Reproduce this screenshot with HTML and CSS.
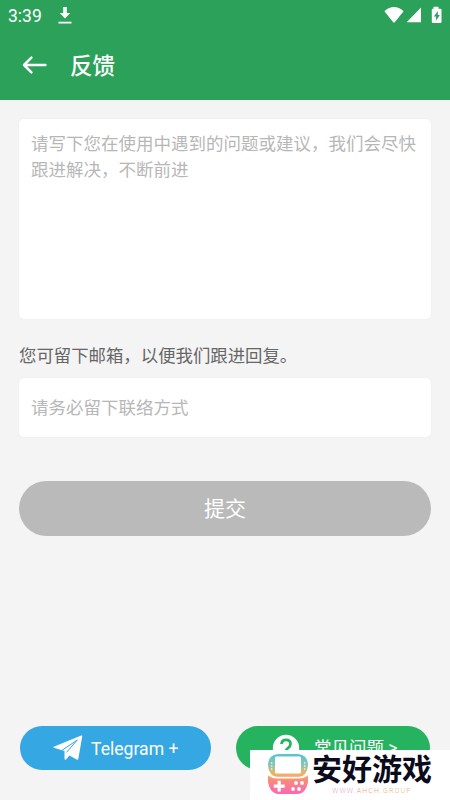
FILE: index.html
```html
<!DOCTYPE html>
<html lang="zh-CN">
<head>
<meta charset="utf-8">
<title>反馈</title>
<link rel="stylesheet" href="styles.css">
</head>
<body>
<div class="screen">
  <header class="header">
    <div class="status">
      <span class="time">3:39</span>
      <svg class="download" width="14" height="18" viewBox="0 0 14 18"><path d="M5.2 0h3.6v6h3.4L7 11.4 1.8 6h3.4zM.5 14.8h13v1.8H.5z" fill="#fff"/></svg>
      <svg class="signals" width="60" height="20" viewBox="0 0 60 20" fill="#fff"><path d="M.4 5.2Q10-3 19.6 5.2L10.8 16.2Q10 17 9.2 16.2zM37 1.5v14.7H22.7zM49.5.8h5v2h2q1 0 1 1v12q0 1.2-1 1.2h-7.7q-1 0-1-1.2v-12q0-1 1-1h.7z"/><path d="M53.8 5 49.9 10.6h2.2v4.2l3.7-5.9h-2z" fill="#2ca15a"/></svg>
    </div>
    <div class="titlebar">
      <svg class="back" width="25" height="20" viewBox="0 0 25 20" fill="none" stroke="#fff" stroke-width="2.5" stroke-linecap="round" stroke-linejoin="round"><path d="M23.4 10H2.5M9.4 2.6 2 10l7.4 7.4"/></svg>
      <h1 class="title">反馈</h1>
    </div>
  </header>
  <main class="form">
    <div class="field message">请写下您在使用中遇到的问题或建议，我们会尽快跟进解决，不断前进</div>
    <div class="label">您可留下邮箱，以便我们跟进回复。</div>
    <div class="field contact">请务必留下联络方式</div>
    <div class="submit">提交</div>
  </main>
  <footer class="links">
    <div class="pill telegram">
      <svg width="30" height="26" viewBox="0 0 30 26"><path d="M.7 11.7 28.2.5q1.2-.4 1 .9L25.4 23.6q-.3 1.6-1.800.8l-7.100-3.900-3.500 3.900q-1.300 1-1.500-.9v-7.500L.9 12.800q-1-.5-.2-1.100z" fill="#fff"/><path d="M9 15.300 24.300 5 13.600 17.300" fill="none" stroke="#35a7e3" stroke-width="1"/></svg>
      <span class="telegram-text">Telegram +</span>
    </div>
    <div class="pill faq">
      <svg width="28" height="28" viewBox="0 0 28 28"><circle cx="14" cy="14" r="13.2" fill="#fff"/><path d="M9.500 10Q9.800 5.800 14 5.800q4.500 0 4.500 4.200 0 2.200-2.300 3.800-2.200 1.500-2.200 3.400" fill="none" stroke="#26b35f" stroke-width="2.700"/><circle cx="14" cy="21" r="1.500" fill="#26b35f"/></svg>
      <span class="faq-text">常见问题 &gt;</span>
    </div>
  </footer>
  <div class="watermark">
    <svg class="console" width="42" height="43" viewBox="0 0 42 43">
      <defs><linearGradient id="shell" x1="0" y1="0" x2="0" y2="1"><stop offset="0" stop-color="#58c5d1"/><stop offset=".25" stop-color="#82c6b5"/><stop offset=".5" stop-color="#f3b35f"/><stop offset=".68" stop-color="#f9887f"/><stop offset="1" stop-color="#fb67b5"/></linearGradient></defs>
      <path d="M11 1h20q10 1 10 11 0 5-3 9-2 2.700-6 2.700H10q-4 0-6-2.700-3-4-3-9Q1 2 11 1zM1.200 22.500q4 3 8.800 3h22q5 0 8.800-3 1 7-1 11-3 7.500-9.200 7.500H11.400q-6.200 0-9.200-7.500-2-4-1-11z" fill="url(#shell)"/>
      <rect x="8" y="3.500" width="26" height="17" rx="1.500" fill="#fff"/>
      <path d="M10.600 27.800h3.200v3.800h3.900v3.200h-3.900v3.800h-3.200v-3.800H6.800v-3.200h3.800z" fill="#fff"/>
      <g fill="#fff"><circle cx="29" cy="30" r="1.900"/><circle cx="35" cy="30" r="1.900"/><circle cx="26" cy="36" r="1.900"/><circle cx="32" cy="36" r="1.900"/><circle cx="4.700" cy="10" r=".8"/><circle cx="4.700" cy="13" r=".8"/><circle cx="4.700" cy="16" r=".8"/><circle cx="37.700" cy="10" r=".8"/><circle cx="37.700" cy="13" r=".8"/><circle cx="37.700" cy="16" r=".8"/></g>
    </svg>
    <div class="brand">
      <div class="brand-name">安好游戏</div>
      <div class="brand-url"><span class="url-start">WWW.</span>AHCH.<span class="url-end">GROUP</span></div>
    </div>
  </div>
</div>
</body>
</html>
```
FILE: styles.css
```css
* { box-sizing: border-box; }
body { margin: 0; font-family: Roboto, "Noto Sans CJK SC", sans-serif; }
svg { display: block; flex: none; }
.screen {
  position: relative;
  display: flex;
  flex-direction: column;
  width: 450px;
  height: 800px;
  overflow: hidden;
  background: #f4f4f4;
}
.header { height: 100px; background: #2ca15a; color: #fff; }
.status { display: flex; height: 32px; padding: 0 6px 0 8px; }
.time { width: 50px; font-size: 17.5px; line-height: 32px; }
.download { margin-top: 7px; }
.signals { margin: 6px 0 0 auto; }
.titlebar { display: flex; align-items: center; height: 66px; padding-left: 22px; }
.title { margin: 2px 0 0 23px; font-size: 22.5px; line-height: 34px; font-weight: 500; }
.form { display: flex; flex-direction: column; padding: 19px 19px 0; }
.field {
  padding: 12px 12px 0;
  border-radius: 5px;
  background: #fff;
  box-shadow: 0 0 2px rgba(0, 0, 0, .05);
  color: #b7b7b7;
  font-size: 17.5px;
  line-height: 26px;
}
.message { height: 200px; }
.label { height: 59px; padding-top: 11px; color: #666; font-size: 17.4px; line-height: 52px; }
.contact { height: 59px; padding-top: 17px; }
.submit {
  height: 55px;
  margin-top: 44px;
  border-radius: 28px;
  background: #bababa;
  color: #fff;
  font-size: 21px;
  line-height: 57px;
  text-align: center;
}
.links { display: flex; justify-content: space-between; margin-top: auto; padding: 0 20px 30px; }
.pill { display: flex; align-items: center; height: 44px; border-radius: 22px; color: #fff; font-size: 17.5px; }
.telegram { width: 191px; padding-left: 33px; background: #35a7e3; }
.telegram-text { margin: 2px 0 0 8px; font-size: 17.6px; }
.faq { width: 194px; padding-left: 36px; background: #26b35f; }
.faq-text { margin: 0 0 3px 14px; white-space: nowrap; }
.watermark {
  position: absolute;
  right: 0;
  bottom: 0;
  display: flex;
  width: 200px;
  height: 50px;
  padding: 3px 0 0 17px;
  background: #fff;
}
.brand { margin-left: 3px; }
.brand-name { height: 34px; color: #0b0b1c; font-size: 30px; line-height: 33px; font-weight: 700; white-space: nowrap; }
.brand-url { padding-left: 20px; color: #ec9d7c; font-size: 7px; line-height: 9px; letter-spacing: 1.15px; font-weight: 300; white-space: nowrap; }
.url-start { color: #e5a3c5; }
.url-end { color: #dfb67c; }
```
